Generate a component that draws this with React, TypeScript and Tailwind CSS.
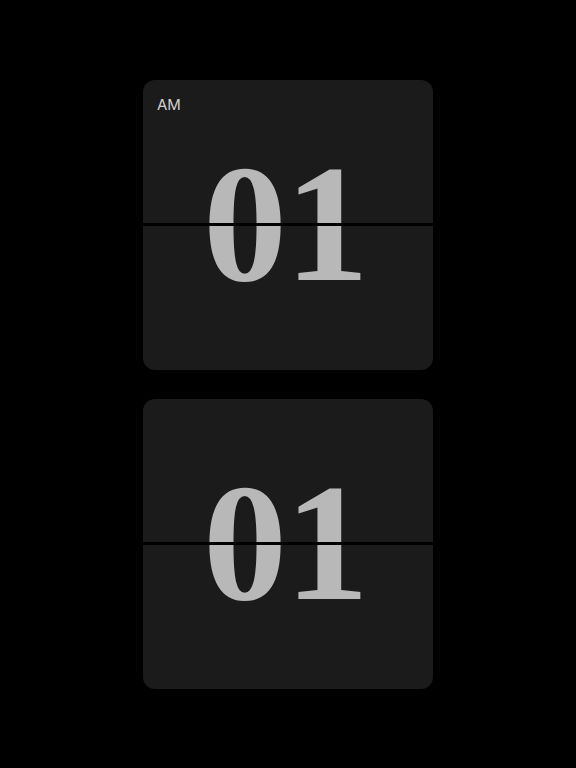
const serif = { fontFamily: '"Liberation Serif", "DejaVu Serif", serif' };

function FlipCard({ value, label }: { value: string; label?: string }) {
  return (
    <div className="relative w-[290px] h-[290px] rounded-xl bg-[#1b1b1b] overflow-hidden">
      {label && (
        <span className="absolute left-[14px] top-[17px] text-[15px] font-normal leading-none text-[#cfcfcf] font-['Inter',sans-serif]">
          {label}
        </span>
      )}
      <div className="flex h-full items-center justify-center">
        <span
          className="text-[168px] font-bold leading-none text-[#b8b8b8] tracking-[-2px] translate-x-[-3px] translate-y-[-2px]"
          style={serif}
        >
          {value}
        </span>
      </div>
      <div className="absolute left-0 right-0 top-[143px] h-[3px] bg-black" />
    </div>
  );
}

export default function App() {
  return (
    <div className="min-h-[768px] w-full bg-black flex flex-col items-center justify-center gap-[29px]">
      <FlipCard value="01" label="AM" />
      <FlipCard value="01" />
    </div>
  );
}
